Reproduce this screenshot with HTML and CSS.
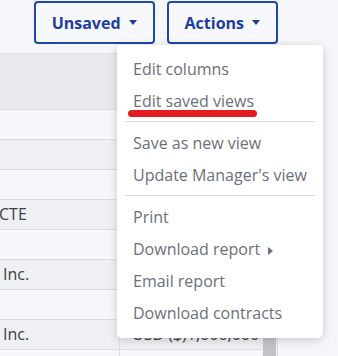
FILE: index.html
```html
<!DOCTYPE html>
<html lang="en">
<head>
    <meta charset="UTF-8">
    <meta name="viewport" content="width=device-width, initial-scale=1.0">
    <title>Report Actions</title>
    <link rel="stylesheet" href="styles.css">
</head>
<body>
    <div class="toolbar">
        <button class="btn">Unsaved <span class="caret"></span></button>
        <button class="btn">Actions <span class="caret"></span></button>
    </div>

    <div class="table-wrap">
        <div class="table">
            <div class="row head"><div class="cell"></div><div class="cell"></div></div>
            <div class="row"><div class="cell"></div><div class="cell"></div></div>
            <div class="row alt"><div class="cell"></div><div class="cell"></div></div>
            <div class="row"><div class="cell"></div><div class="cell"></div></div>
            <div class="row alt"><div class="cell cut">CTE</div><div class="cell"></div></div>
            <div class="row"><div class="cell"></div><div class="cell"></div></div>
            <div class="row alt"><div class="cell">Inc.</div><div class="cell"></div></div>
            <div class="row"><div class="cell"></div><div class="cell"></div></div>
            <div class="row alt"><div class="cell">Inc.</div><div class="cell">USD ($)1,000,000</div></div>
            <div class="row short"><div class="cell"></div><div class="cell"></div></div>
        </div>
        <div class="scrollbar"><div class="thumb"></div></div>
    </div>

    <ul class="menu">
        <li>Edit columns</li>
        <li>Edit saved views</li>
        <li class="divider"></li>
        <li>Save as new view</li>
        <li>Update Manager's view</li>
        <li class="divider"></li>
        <li>Print</li>
        <li>Download report <span class="sub"></span></li>
        <li>Email report</li>
        <li>Download contracts</li>
    </ul>
    <div class="mark"></div>
</body>
</html>
```

FILE: styles.css
```css
html, body {
    height: 100%;
    overflow: hidden;
}
body {
    margin: 0;
    background: #f5f6fa;
    font-family: "Open Sans", Arial, sans-serif;
    font-size: 16px;
}
.toolbar {
    display: flex;
    justify-content: flex-end;
    gap: 12px;
    padding: 1px 60px 0 0;
    height: 44px;
}
.btn {
    display: flex;
    align-items: center;
    height: 43px;
    padding: 0 16px 0 16px;
    border: 2px solid #1f47a8;
    border-radius: 4px;
    background: #f7f8fc;
    color: #1d3e9c;
    font-family: inherit;
    font-size: 16px;
    font-weight: 700;
}
.caret {
    display: inline-block;
    margin-left: 8px;
    border-left: 4px solid transparent;
    border-right: 4px solid transparent;
    border-top: 5px solid #1d3e9c;
}
.table-wrap {
    display: flex;
    width: 278px;
    margin-top: 8px;
    border-top: 1px solid #dfe0e4;
}
.table {
    width: 262px;
}
.row {
    display: flex;
    height: 30px;
    box-sizing: border-box;
    border-bottom: 1px solid #dcdde1;
    background: #f6f7fb;
}
.row.alt {
    background: #eff0f4;
}
.row.head {
    height: 56px;
    background: #e8e9ed;
}
.row.short {
    height: 6px;
    border-bottom: 0;
}
.cell {
    line-height: 29px;
    color: #3b3e44;
    white-space: nowrap;
    overflow: hidden;
}
.cell:first-child {
    width: 120px;
    padding-left: 3px;
    box-sizing: border-box;
    border-right: 1px solid #dcdde1;
}
.cell:last-child {
    padding-left: 12px;
}
.cell.cut {
    text-indent: -4px;
}
.scrollbar {
    width: 16px;
    background: #f1f1f3;
    border-right: 1px solid #dcdde1;
    box-sizing: border-box;
}
.thumb {
    margin: 281px 1px 0 1px;
    height: 21px;
    background: #c3c3c5;
}
.menu {
    position: absolute;
    left: 117px;
    top: 45px;
    width: 206px;
    margin: 0;
    padding: 8px 0 9px;
    list-style: none;
    background: #fff;
    border-radius: 5px;
    box-shadow: 0 2px 10px rgba(0, 0, 0, 0.18);
    color: #6b7078;
}
.menu li {
    height: 32px;
    line-height: 32px;
    padding-left: 16px;
    white-space: nowrap;
}
.menu li.divider {
    height: 1px;
    margin: 4px 8px 5px;
    padding: 0;
    background: #dcdde1;
}
.sub {
    display: inline-block;
    margin-left: 4px;
    border-top: 4px solid transparent;
    border-bottom: 4px solid transparent;
    border-left: 5px solid #6b7078;
}
.mark {
    position: absolute;
    left: 128px;
    top: 110px;
    width: 129px;
    height: 7px;
    border-radius: 4px;
    background: #e31c1f;
}
```
